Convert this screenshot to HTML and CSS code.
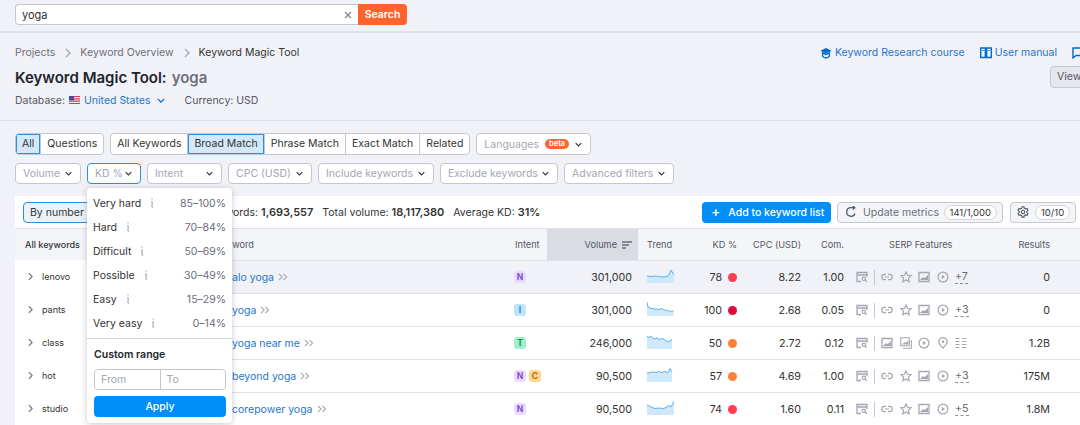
FILE: index.html
```html
<!doctype html>
<html lang="en">
<head>
	<meta charset="UTF-8">
	<title>Keyword Magic Tool</title>
	<link rel="stylesheet" href="styles.css">
</head>
<body>
	<svg class="defs" width="0" height="0">
		<symbol id="chev" viewBox="0 0 10 6"><path d="M1 1l4 4 4-4" fill="none" stroke="currentColor" stroke-width="1.6"/></symbol>
		<symbol id="right" viewBox="0 0 6 10"><path d="M1 1l4 4-4 4" fill="none" stroke="currentColor" stroke-width="1.3"/></symbol>
		<symbol id="dbl" viewBox="0 0 11 9"><path d="M1 1l3.5 3.5L1 8M6 1l3.5 3.5L6 8" fill="none" stroke="currentColor" stroke-width="1.2"/></symbol>
		<symbol id="serp" viewBox="0 0 12 12"><path d="M5 10.5H1v-9h10V6M1 4h10" fill="none" stroke="currentColor" stroke-width="1.3"/><circle cx="7.8" cy="7.8" r="1.7" fill="none" stroke="currentColor" stroke-width="1.2"/><path d="M9 9l1.8 1.8" stroke="currentColor" stroke-width="1.2"/></symbol>
		<symbol id="link" viewBox="0 0 12 12"><path d="M5 3.3H3.500a2.700 2.700 0 000 5.400H5M7 3.300h1.500a2.700 2.700 0 010 5.400H7M3.800 6h4.400" fill="none" stroke="currentColor" stroke-width="1.2"/></symbol>
		<symbol id="star" viewBox="0 0 12 12"><path d="M6 1l1.500 3.300 3.600.4-2.700 2.400.8 3.600L6 8.900l-3.200 1.800.8-3.600L.9 4.700l3.600-.4z" fill="none" stroke="currentColor" stroke-width="1.2"/></symbol>
		<symbol id="pic" viewBox="0 0 12 12"><path d="M1 1.500h10v9H1z" fill="none" stroke="currentColor" stroke-width="1.3"/><path d="M2 9l3-3 1.500 1.300L10 4v5z" fill="currentColor"/></symbol>
		<symbol id="pics" viewBox="0 0 12 12"><path d="M.7.7h8.600v8H.7z" fill="none" stroke="currentColor" stroke-width="1.1"/><path d="M2 7.500l2.500-2.500 1.200 1L8.300 3.300v4.200z" fill="currentColor"/><path d="M11.300 3v8.300H3" fill="none" stroke="currentColor" stroke-width="1.1"/></symbol>
		<symbol id="play" viewBox="0 0 12 12"><circle cx="6" cy="6" r="4.900" fill="none" stroke="currentColor" stroke-width="1.2"/><path d="M4.800 3.800L8 6 4.800 8.200z" fill="currentColor"/></symbol>
		<symbol id="pin" viewBox="0 0 12 12"><path d="M6 11.200C3.500 8.500 1.800 6.800 1.800 4.800a4.200 4.200 0 018.400 0c0 2-1.700 3.700-4.200 6.400z" fill="none" stroke="currentColor" stroke-width="1.2"/><circle cx="6" cy="4.800" r="1.300" fill="currentColor"/></symbol>
		<symbol id="list" viewBox="0 0 12 12"><path d="M.5 1.500h4M.5 4.500h4M.5 7.500h4M.5 10.500h4M7 1.500h4.500M7 4.500h4.500M7 7.500h4.500M7 10.500h4.500" stroke="currentColor" stroke-width="1.2"/></symbol>
		<symbol id="info" viewBox="0 0 6 12"><path d="M3.100 1.500v1.300M2 5h1.300l-.4 4.500c0 .6.400.8 1.300.7" fill="none" stroke="currentColor" stroke-width="1.1"/></symbol>
	</svg>

	<div class="topbar">
		<div class="searchbox">
			<div class="searchinput"><span>yoga</span><svg class="clear" viewBox="0 0 8 8"><path d="M1 1l6 6M7 1L1 7" stroke="#8a8e9b" stroke-width="1.5"/></svg></div>
			<div class="searchbtn">Search</div>
		</div>
	</div>

	<div class="head">
		<div class="headrow">
			<div class="crumbs">
				<span>Projects</span><svg class="crumbarrow"><use href="#right"/></svg>
				<span>Keyword Overview</span><svg class="crumbarrow"><use href="#right"/></svg>
				<span class="cur">Keyword Magic Tool</span>
			</div>
			<div class="links">
				<svg class="linkicon" viewBox="0 0 12 12"><path d="M6 1L.3 3.800 6 6.600l5.700-2.800z" fill="#006dca"/><path d="M2.600 5.800v3.400C3.500 10.400 4.800 11 6 11s2.500-.6 3.400-1.800V5.800L6 7.500z" fill="none" stroke="#006dca" stroke-width="1.4"/></svg>
				<span class="lnk">Keyword Research course</span>
				<svg class="linkicon" viewBox="0 0 12 12"><path d="M.7 1h4.600v9.500H.7zM6.700 1h4.600v9.500H6.700z" fill="none" stroke="#006dca" stroke-width="1.4"/><path d="M2.300 3.500h1.400M8.300 3.500h1.400" stroke="#006dca" stroke-width="1.2"/></svg>
				<span class="lnk">User manual</span>
				<svg class="linkicon" viewBox="0 0 12 12"><path d="M1 1h10v7.500H4L1 11z" fill="none" stroke="#006dca" stroke-width="1.4"/></svg>
			</div>
		</div>
		<div class="titlerow">
			<h1>Keyword Magic Tool:</h1><span class="query">yoga</span>
			<div class="viewbtn">View</div>
		</div>
		<div class="dbrow">
			<span>Database:</span>
			<svg class="flag" viewBox="0 0 11 8"><rect width="11" height="8" fill="#e9e9f2"/><path d="M0 0h11v1.100H0zM0 2.300h11v1.100H0zM0 4.600h11v1.100H0zM0 6.900h11V8H0z" fill="#d2404f"/><rect width="5" height="4.300" fill="#3f4f9c"/></svg>
			<span class="dbname">United States</span>
			<svg class="dbchev"><use href="#chev"/></svg>
			<span>Currency: USD</span>
		</div>
	</div>

	<div class="filters">
		<div class="tabrow">
			<div class="seg">
				<span class="active">All</span><span>Questions</span>
			</div>
			<div class="seg">
				<span>All Keywords</span><span class="active">Broad Match</span><span>Phrase Match</span><span>Exact Match</span><span>Related</span>
			</div>
			<div class="sel lang"><span>Languages</span><b class="beta">beta</b><svg class="selchev"><use href="#chev"/></svg></div>
		</div>
		<div class="tabrow">
			<div class="sel w66">Volume<svg class="selchev"><use href="#chev"/></svg></div>
			<div class="sel w54 open">KD %<svg class="selchev"><use href="#chev"/></svg></div>
			<div class="sel w75">Intent<svg class="selchev"><use href="#chev"/></svg></div>
			<div class="sel w84">CPC (USD)<svg class="selchev"><use href="#chev"/></svg></div>
			<div class="sel w116">Include keywords<svg class="selchev"><use href="#chev"/></svg></div>
			<div class="sel w118">Exclude keywords<svg class="selchev"><use href="#chev"/></svg></div>
			<div class="sel w110">Advanced filters<svg class="selchev"><use href="#chev"/></svg></div>
		</div>
	</div>

	<div class="panel">
		<div class="toolbar">
			<div class="bynumber">By number</div>
			<div class="totals">
				<span>All keywords: <b>1,693,557</b></span>
				<span>Total volume: <b>18,117,380</b></span>
				<span>Average KD: <b>31%</b></span>
			</div>
			<div class="addbtn"><span class="plus">+</span>Add to keyword list</div>
			<div class="toolbtn update">
				<svg class="reload" viewBox="0 0 12 12"><path d="M10 7.500A4.300 4.300 0 116 1.700h3.500M7.800 0l2 1.700-2 1.700" fill="none" stroke="#555761" stroke-width="1.3"/></svg>
				Update metrics<span class="pill">141/1,000</span>
			</div>
			<div class="toolbtn gear">
				<svg class="reload" viewBox="0 0 12 12"><path d="M5 .8h2l.3 1.500 1.300.7 1.400-.5 1 1.700-1.100 1 0 1.500 1.100 1-1 1.700-1.400-.5-1.300.7-.3 1.500H5l-.3-1.500-1.300-.7-1.400.5-1-1.700 1.100-1 0-1.500-1.100-1 1-1.700 1.400.5 1.300-.7z" fill="none" stroke="#555761" stroke-width="1.1"/><circle cx="6" cy="6" r="1.700" fill="none" stroke="#555761" stroke-width="1.1"/></svg>
				<span class="pill">10/10</span>
			</div>
		</div>

		<div class="body">
			<div class="side">
				<div class="sidehead">All keywords</div>
				<div class="sideitem"><svg class="sidearrow"><use href="#right"/></svg>lenovo</div>
				<div class="sideitem"><svg class="sidearrow"><use href="#right"/></svg>pants</div>
				<div class="sideitem"><svg class="sidearrow"><use href="#right"/></svg>class</div>
				<div class="sideitem"><svg class="sidearrow"><use href="#right"/></svg>hot</div>
				<div class="sideitem"><svg class="sidearrow"><use href="#right"/></svg>studio</div>
			</div>

			<div class="table">
				<div class="row thead">
					<div class="c-kw">Keyword</div>
					<div class="c-intent">Intent</div>
					<div class="c-vol sorted">Volume
						<svg class="sorticon" viewBox="0 0 10 8"><path d="M0 1h10M0 4h7M0 7h4" stroke="#6c6e79" stroke-width="1.3"/></svg>
					</div>
					<div class="c-trend">Trend</div>
					<div class="c-kd">KD %</div>
					<div class="c-cpc">CPC (USD)</div>
					<div class="c-com">Com.</div>
					<div class="c-serp">SERP Features</div>
					<div class="c-res">Results</div>
				</div>

				<div class="row hover">
					<div class="c-kw"><span class="kw">alo yoga</span><svg class="dbl"><use href="#dbl"/></svg></div>
					<div class="c-intent"><span class="badge n">N</span></div>
					<div class="c-vol">301,000</div>
					<div class="c-trend"><svg class="spark" viewBox="0 0 27 15"><path d="M0 7l4 .5 4-.5 3 .5 5 .5 4-.5 2-1.500 2-5 3 5V14H0z" fill="#cfe8fb"/><path d="M0 7l4 .5 4-.5 3 .5 5 .5 4-.5 2-1.500 2-5 3 5" fill="none" stroke="#5ab3f2"/></svg></div>
					<div class="c-kd">78<i class="dot red"></i></div>
					<div class="c-cpc">8.22</div>
					<div class="c-com">1.00</div>
					<div class="c-serp"><svg class="fi"><use href="#serp"/></svg><i class="sep"></i><svg class="fi"><use href="#link"/></svg><svg class="fi"><use href="#star"/></svg><svg class="fi"><use href="#pic"/></svg><svg class="fi"><use href="#play"/></svg><span class="more">+7</span></div>
					<div class="c-res">0</div>
				</div>

				<div class="row">
					<div class="c-kw"><span class="kw">yoga</span><svg class="dbl"><use href="#dbl"/></svg></div>
					<div class="c-intent"><span class="badge i">I</span></div>
					<div class="c-vol">301,000</div>
					<div class="c-trend"><svg class="spark" viewBox="0 0 27 15"><path d="M0 0l1 5 3 1.500 4 .5 4 .5 2.500-1 3 1.500 3 .5 3 1 3-.5V14H0z" fill="#cfe8fb"/><path d="M0 0l1 5 3 1.500 4 .5 4 .5 2.500-1 3 1.500 3 .5 3 1 3-.5" fill="none" stroke="#5ab3f2"/></svg></div>
					<div class="c-kd">100<i class="dot crimson"></i></div>
					<div class="c-cpc">2.68</div>
					<div class="c-com">0.05</div>
					<div class="c-serp"><svg class="fi"><use href="#serp"/></svg><i class="sep"></i><svg class="fi"><use href="#link"/></svg><svg class="fi"><use href="#star"/></svg><svg class="fi"><use href="#pic"/></svg><svg class="fi"><use href="#play"/></svg><span class="more">+3</span></div>
					<div class="c-res">0</div>
				</div>

				<div class="row">
					<div class="c-kw"><span class="kw">yoga near me</span><svg class="dbl"><use href="#dbl"/></svg></div>
					<div class="c-intent"><span class="badge t">T</span></div>
					<div class="c-vol">246,000</div>
					<div class="c-trend"><svg class="spark" viewBox="0 0 27 15"><path d="M0 1l2 1.500 2-1.500 3 3 3-1 2.500 1.500 2-1 3 1 3 2 3-.5 1.500-2V14H0z" fill="#cfe8fb"/><path d="M0 1l2 1.500 2-1.500 3 3 3-1 2.500 1.500 2-1 3 1 3 2 3-.5 1.500-2" fill="none" stroke="#5ab3f2"/></svg></div>
					<div class="c-kd">50<i class="dot orange"></i></div>
					<div class="c-cpc">2.72</div>
					<div class="c-com">0.12</div>
					<div class="c-serp"><svg class="fi"><use href="#serp"/></svg><i class="sep"></i><svg class="fi"><use href="#pic"/></svg><svg class="fi"><use href="#pics"/></svg><svg class="fi"><use href="#play"/></svg><svg class="fi"><use href="#pin"/></svg><svg class="fi"><use href="#list"/></svg></div>
					<div class="c-res">1.2B</div>
				</div>

				<div class="row">
					<div class="c-kw"><span class="kw">beyond yoga</span><svg class="dbl"><use href="#dbl"/></svg></div>
					<div class="c-intent"><span class="badge n">N</span><span class="badge c">C</span></div>
					<div class="c-vol">90,500</div>
					<div class="c-trend"><svg class="spark" viewBox="0 0 27 15"><path d="M0 5l3-.5 3-.5 3 .5 3-1 3 1 3-1 3 1 2-4 2 3.500V14H0z" fill="#cfe8fb"/><path d="M0 5l3-.5 3-.5 3 .5 3-1 3 1 3-1 3 1 2-4 2 3.500" fill="none" stroke="#5ab3f2"/></svg></div>
					<div class="c-kd">57<i class="dot orange"></i></div>
					<div class="c-cpc">4.69</div>
					<div class="c-com">1.00</div>
					<div class="c-serp"><svg class="fi"><use href="#serp"/></svg><i class="sep"></i><svg class="fi"><use href="#link"/></svg><svg class="fi"><use href="#star"/></svg><svg class="fi"><use href="#pic"/></svg><svg class="fi"><use href="#play"/></svg><span class="more">+3</span></div>
					<div class="c-res">175M</div>
				</div>

				<div class="row">
					<div class="c-kw"><span class="kw">corepower yoga</span><svg class="dbl"><use href="#dbl"/></svg></div>
					<div class="c-intent"><span class="badge n">N</span></div>
					<div class="c-vol">90,500</div>
					<div class="c-trend"><svg class="spark" viewBox="0 0 27 15"><path d="M0 4l4 2 4 1.500 4-.5 4 .5 3-1 3-2 2 1.500 3-6V14H0z" fill="#cfe8fb"/><path d="M0 4l4 2 4 1.500 4-.5 4 .5 3-1 3-2 2 1.500 3-6" fill="none" stroke="#5ab3f2"/></svg></div>
					<div class="c-kd">74<i class="dot red"></i></div>
					<div class="c-cpc">1.60</div>
					<div class="c-com">0.11</div>
					<div class="c-serp"><svg class="fi"><use href="#serp"/></svg><i class="sep"></i><svg class="fi"><use href="#link"/></svg><svg class="fi"><use href="#star"/></svg><svg class="fi"><use href="#pic"/></svg><svg class="fi"><use href="#play"/></svg><span class="more">+5</span></div>
					<div class="c-res">1.8M</div>
				</div>
			</div>
		</div>
	</div>

	<!-- KD dropdown -->
	<div class="kdmenu">
		<div class="kditem"><span>Very hard</span><svg class="inf"><use href="#info"/></svg><em>85–100%</em></div>
		<div class="kditem"><span>Hard</span><svg class="inf"><use href="#info"/></svg><em>70–84%</em></div>
		<div class="kditem"><span>Difficult</span><svg class="inf"><use href="#info"/></svg><em>50–69%</em></div>
		<div class="kditem"><span>Possible</span><svg class="inf"><use href="#info"/></svg><em>30–49%</em></div>
		<div class="kditem"><span>Easy</span><svg class="inf"><use href="#info"/></svg><em>15–29%</em></div>
		<div class="kditem"><span>Very easy</span><svg class="inf"><use href="#info"/></svg><em>0–14%</em></div>
		<div class="custom">
			<div class="customtitle">Custom range</div>
			<div class="rangebox"><span>From</span><span>To</span></div>
			<div class="apply">Apply</div>
		</div>
	</div>
</body>
</html>
```

FILE: styles.css
```css
html,body{
	margin:0;
	padding:0;
	height:425px;
	overflow:hidden;
}
body{
	position:relative;
	background:#f1f2f8;
	font-family:"Inter","Liberation Sans",sans-serif;
	font-size:10.5px;
	color:#333;
	white-space:nowrap;
}
.defs{
	position:absolute;
}

/* top search */
.topbar{
	height:27px;
	padding:4px 0 0 15px;
	border-bottom:2px solid #e0e1e9;
}
.searchbox{
	display:flex;
	width:392px;
	height:21px;
}
.searchinput{
	flex:1;
	display:flex;
	justify-content:space-between;
	align-items:center;
	padding:0 6px;
	background:#fff;
	border:1px solid #c4c7cf;
	border-right:0;
	border-radius:4px 0 0 4px;
	font-size:11px;
}
.clear{
	width:8px;
	height:8px;
}
.searchbtn{
	width:49px;
	background:#ff642d;
	color:#fff;
	font-weight:600;
	text-align:center;
	line-height:21px;
	border-radius:0 4px 4px 0;
}

/* heading */
.head{
	height:87px;
	padding:0 0 0 15px;
	border-bottom:1px solid #dcdde5;
}
.headrow{
	display:flex;
	justify-content:space-between;
	padding-top:12px;
	height:16px;
	line-height:16px;
}
.crumbs{
	display:flex;
	align-items:center;
	color:#6c6e79;
}
.crumbs .cur{
	color:#333;
}
.crumbarrow{
	width:6px;
	height:10px;
	margin:0 9px 0 10px;
	color:#a4a6b3;
}
.links{
	display:flex;
	align-items:center;
	margin-right:-7px;
	color:#1e76cd;
}
.linkicon{
	width:12px;
	height:12px;
	margin-right:3px;
}
.lnk{
	margin-right:15px;
}
.titlerow{
	display:flex;
	align-items:center;
	height:22px;
	margin-top:5px;
}
h1{
	margin:0;
	font-size:15px;
	font-weight:600;
	color:#22242c;
}
.query{
	margin-left:5px;
	font-size:15px;
	font-weight:600;
	color:#6c6e79;
}
.viewbtn{
	margin-left:auto;
	margin-right:-38px;
	width:60px;
	height:20px;
	line-height:20px;
	padding-left:6px;
	background:#e6e7ed;
	border:1px solid #c4c7cf;
	border-radius:4px;
	color:#555761;
}
.dbrow{
	display:flex;
	align-items:center;
	height:16px;
	margin-top:4px;
	color:#555761;
}
.flag{
	width:11px;
	height:8px;
	margin:0 4px;
}
.dbname{
	color:#1e76cd;
}
.dbchev{
	width:8px;
	height:5px;
	margin:0 20px 0 6px;
	color:#006dca;
}

/* filters */
.filters{
	padding:12px 0 0 15px;
	height:63px;
}
.tabrow{
	display:flex;
	gap:6px;
	height:22px;
	margin-bottom:8px;
}
.tabrow+.tabrow{
	height:21px;
}
.seg{
	display:flex;
	background:#fff;
	border:1px solid #c4c7cf;
	border-radius:4px;
	box-sizing:border-box;
	overflow:hidden;
}
.seg span{
	padding:0 6px;
	line-height:20px;
	border-left:1px solid #c4c7cf;
	color:#333;
}
.seg span:first-child{
	border-left:0;
}
.seg .active{
	background:#d3e8f9;
	box-shadow:inset 0 0 0 1px #2b8fe0;
}
.sel{
	display:flex;
	align-items:center;
	justify-content:space-between;
	box-sizing:border-box;
	padding:0 8px 0 7px;
	background:#fff;
	border:1px solid #c4c7cf;
	border-radius:4px;
	color:#a4a6b3;
}
.sel.open{
	border-color:#2b8fe0;
}
.selchev{
	width:7px;
	height:5px;
	color:#333;
}
.lang{
	width:115px;
}
.beta{
	margin:0 auto 0 6px;
	padding:0 4px;
	background:#ff642d;
	border-radius:6px;
	color:#fff;
	font-size:7.5px;
	font-weight:600;
	line-height:10px;
}
.w66{width:66px;}
.w54{width:54px;}
.w75{width:75px;}
.w84{width:84px;}
.w116{width:116px;}
.w118{width:118px;}
.w110{width:110px;}

/* results panel */
.panel{
	margin:0 0 0 15px;
	background:#fff;
}
.toolbar{
	display:flex;
	align-items:center;
	height:32px;
	padding-left:8px;
	border-bottom:1px solid #e0e1e9;
}
.bynumber{
	width:90px;
	height:21px;
	line-height:19px;
	padding-left:6px;
	box-sizing:border-box;
	background:#e9f3fc;
	border:1px solid #2b8fe0;
	border-radius:4px;
}
.totals{
	display:flex;
	gap:9px;
	margin-left:79px;
	width:510px;
}
.totals b{
	font-size:11px;
	font-weight:600;
}
.addbtn{
	display:flex;
	align-items:center;
	width:129px;
	height:21px;
	box-sizing:border-box;
	padding-left:9px;
	background:#008ff8;
	border-radius:4px;
	color:#fff;
	font-weight:500;
}
.plus{
	margin-right:8px;
	font-size:14px;
	line-height:14px;
}
.toolbtn{
	display:flex;
	align-items:center;
	height:21px;
	box-sizing:border-box;
	background:#f4f5f9;
	border:1px solid #c4c7cf;
	border-radius:4px;
	color:#6c6e79;
}
.update{
	width:166px;
	margin-left:6px;
	padding-left:7px;
}
.gear{
	width:66px;
	margin-left:7px;
	padding-left:6px;
}
.reload{
	width:12px;
	height:12px;
	margin-right:6px;
	flex:none;
}
.pill{
	margin-left:auto;
	margin-right:5px;
	padding:0 5px;
	height:13px;
	line-height:13px;
	background:#fff;
	border:1px solid #d1d4db;
	border-radius:8px;
	color:#333;
	font-size:9.5px;
}
.body{
	display:flex;
}
.side{
	width:175px;
	flex:none;
}
.sidehead{
	height:31px;
	padding-left:10px;
	line-height:31px;
	background:#f4f5f9;
	font-size:9px;
	font-weight:500;
	box-sizing:border-box;
}
.sideitem{
	display:flex;
	align-items:center;
	height:33px;
	padding-left:13px;
	font-size:9px;
}
.sidearrow{
	width:5px;
	height:9px;
	margin-right:9px;
	color:#6c6e79;
}

/* keyword table */
.table{
	flex:1;
}
.row{
	display:grid;
	grid-template-columns:325px 32px 91px 52px 50px 61px 43px 156px 50px 30px;
	height:33px;
	box-sizing:border-box;
	border-bottom:1px solid #e0e1e9;
	align-items:center;
	font-size:10.7px;
}
.row.hover{
	background:#f1f2f8;
}
.thead{
	height:32px;
	background:#f4f5f9;
	font-size:9.2px;
	color:#555761;
}
.c-kw{
	display:flex;
	align-items:center;
	padding-left:42px;
	font-size:10.5px;
}
.thead .c-kw{
	padding-left:26px;
	font-size:9.2px;
}
.thead .c-serp{
	padding-left:45px;
}
.kw{
	color:#1e76cd;
}
.dbl{
	width:10px;
	height:8px;
	margin-left:4px;
	color:#a4a6b3;
}
.c-intent{
	display:flex;
	gap:3px;
}
.badge{
	width:12px;
	height:12px;
	line-height:12px;
	text-align:center;
	border-radius:3px;
	font-size:8.5px;
	font-weight:700;
}
.badge:first-child{
	margin-left:-1px;
}
.badge.n{background:#ebdcff;color:#7a4fd8;}
.badge.i{background:#c0e3fc;color:#2a85d0;}
.badge.t{background:#9ef2c9;color:#1e8a62;}
.badge.c{background:#ffd98a;color:#b8701a;}
.c-vol{
	display:flex;
	align-items:center;
	justify-content:flex-end;
	padding-right:6px;
}
.sorted{
	align-self:stretch;
	background:#dadce3;
}
.sorticon{
	width:10px;
	height:8px;
	margin-left:5px;
}
.c-trend{
	display:flex;
	padding-left:9px;
}
.spark{
	width:27px;
	height:15px;
	margin-bottom:2px;
}
.c-kd{
	display:flex;
	align-items:center;
	justify-content:flex-end;
	padding-right:3px;
}
.dot{
	width:9px;
	height:9px;
	margin:0 0 0 6px;
	border-radius:50%;
}
.dot.red{background:#ff3d50;}
.dot.crimson{background:#db0d3e;}
.dot.orange{background:#ff8036;}
.c-cpc,.c-com,.c-res{
	text-align:right;
}
.c-serp{
	display:flex;
	align-items:center;
	padding-left:12px;
}
.fi{
	width:12px;
	height:12px;
	margin-right:6.4px;
	color:#a4a6b3;
	flex:none;
}
.sep{
	width:1px;
	height:15px;
	margin:0 6px 0 0;
	background:#c4c7cf;
}
.more{
	color:#6c6e79;
	border-bottom:1px dashed #8a8e9b;
	line-height:12px;
}

/* KD dropdown over the table */
.kdmenu{
	position:absolute;
	left:87px;
	top:188px;
	width:145px;
	box-sizing:border-box;
	padding-top:3px;
	background:#fff;
	border-radius:4px;
	box-shadow:0 1px 6px rgba(30,35,60,.25);
}
.kditem{
	display:flex;
	align-items:center;
	height:24px;
	padding:0 6px;
}
.inf{
	width:6px;
	height:12px;
	margin-left:8px;
	color:#a4a6b3;
}
.kditem em{
	margin-left:auto;
	font-style:normal;
	color:#6c6e79;
}
.custom{
	margin-top:3px;
	padding:8px 6px 6px 7px;
	border-top:1px solid #d1d4db;
}
.customtitle{
	font-weight:600;
	color:#22242c;
	line-height:16px;
	margin-bottom:6px;
}
.rangebox{
	display:flex;
	height:21px;
	box-sizing:border-box;
	border:1px solid #c4c7cf;
	border-radius:4px;
	color:#a4a6b3;
	line-height:19px;
}
.rangebox span{
	flex:1;
	padding-left:6px;
}
.rangebox span+span{
	border-left:1px solid #c4c7cf;
}
.apply{
	margin-top:6px;
	height:21px;
	line-height:21px;
	text-align:center;
	background:#008ff8;
	border-radius:4px;
	color:#fff;
	font-weight:500;
}
```
